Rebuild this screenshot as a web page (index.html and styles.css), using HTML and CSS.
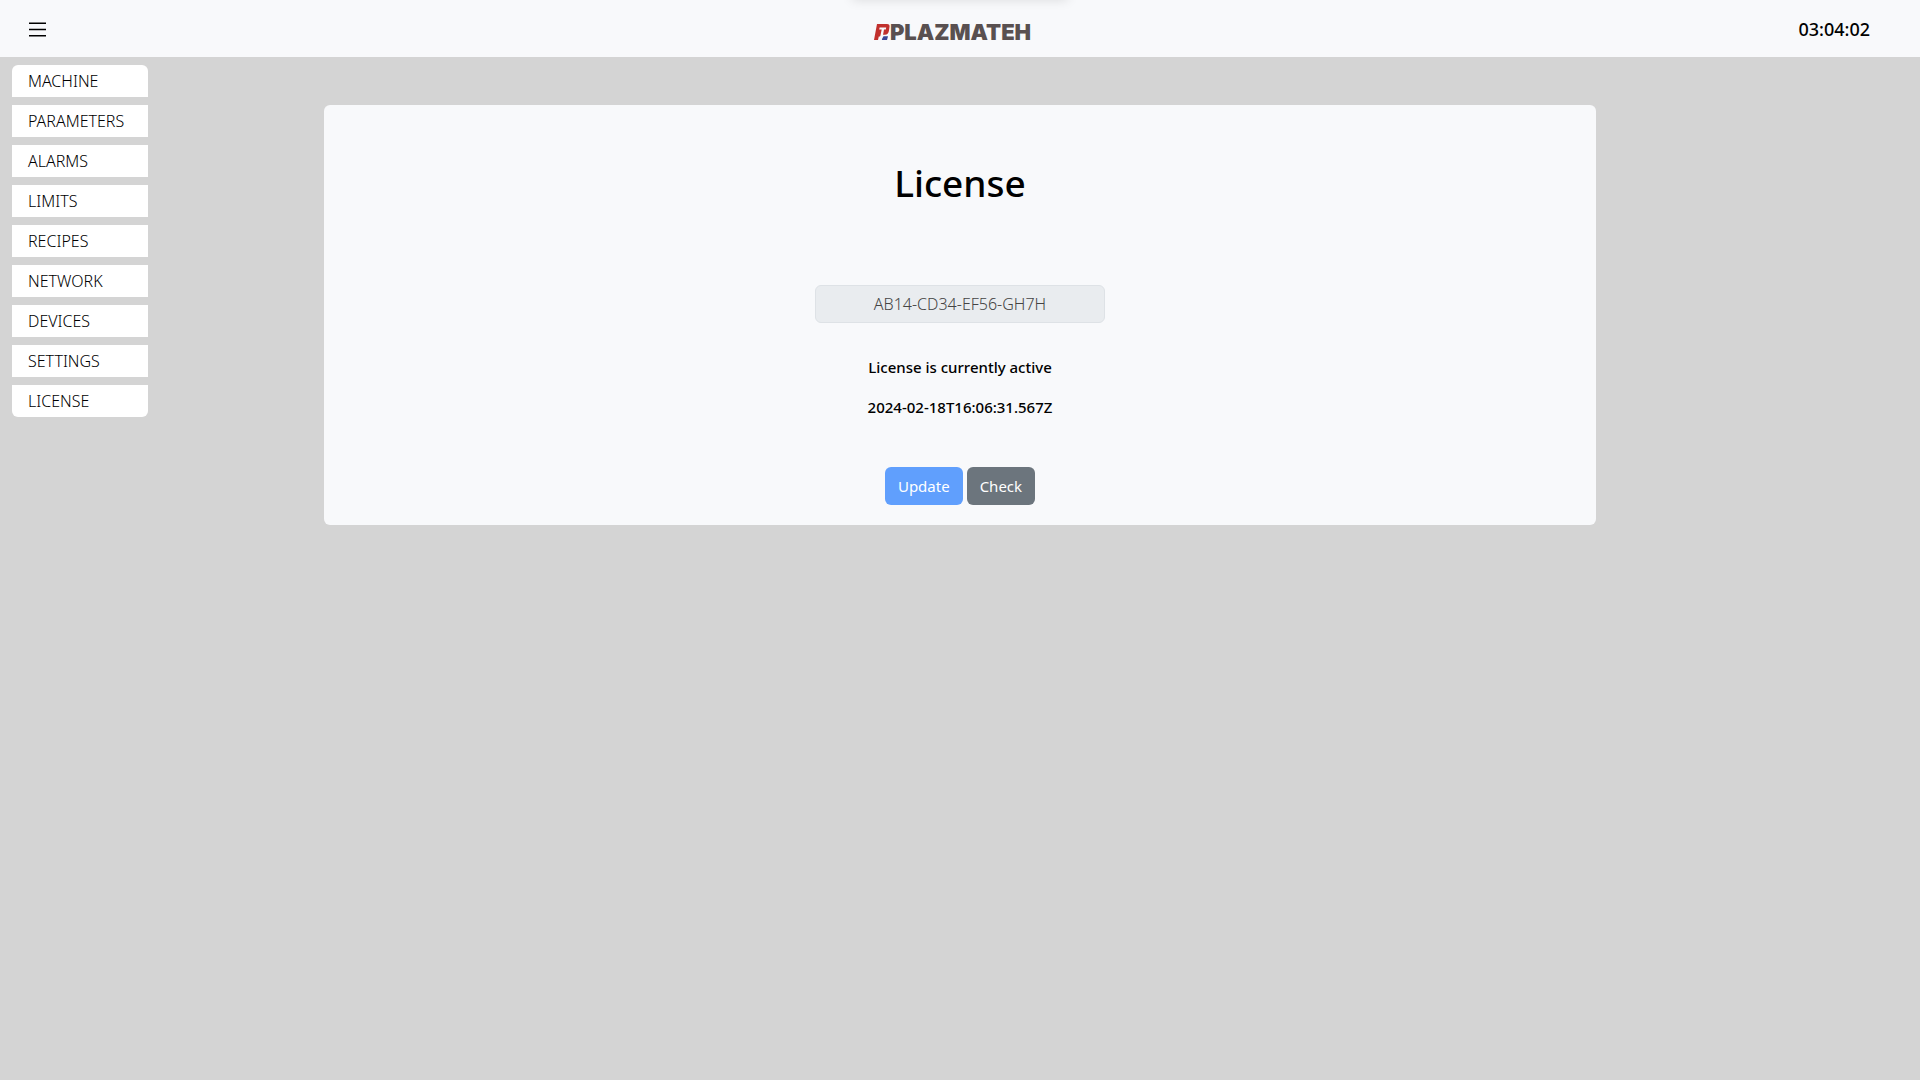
FILE: index.html
```html
<!DOCTYPE html>
<html lang="en">
<head>
<meta charset="utf-8">
<meta name="viewport" content="width=device-width, initial-scale=1">
<title>Plazmateh - License</title>
<link rel="stylesheet" href="styles.css">
</head>
<body>
<header class="topbar">
  <button class="menu-toggle" type="button" aria-label="Toggle menu">
    <svg width="17" height="15" viewBox="0 0 17 15" fill="none" stroke="currentColor" stroke-width="1.4"><path d="M0 1.300h17M0 7.500h17M0 13.700h17"/></svg>
  </button>
  <a class="brand" href="#">
    <svg class="brand-mark" width="16" height="16" viewBox="0 0 16 16" aria-hidden="true">
      <path fill="#c1302d" d="M3 0h10q3 0 2.500 3l-.6 4q-.6 3.500-4 3.800H7.500L6.400 12.500H4.800L4 16H0z"/>
      <path fill="#f8f9fb" d="M5.600 3.600h6.600l-.4 2H10L8.700 12.400l-1 3.600H5.500L7.700 5.600H5.200z"/>
      <path fill="#3a4596" d="M9.500 12.200H14L13 16H7.800l.5-1.500z"/>
    </svg>
    <span class="brand-name">PLAZMATEH</span>
  </a>
  <time class="clock">03:04:02</time>
</header>
<div class="layout">
  <nav class="sidebar" aria-label="Main">
    <a class="nav-item" href="#">MACHINE</a>
    <a class="nav-item" href="#">PARAMETERS</a>
    <a class="nav-item" href="#">ALARMS</a>
    <a class="nav-item" href="#">LIMITS</a>
    <a class="nav-item" href="#">RECIPES</a>
    <a class="nav-item" href="#">NETWORK</a>
    <a class="nav-item" href="#">DEVICES</a>
    <a class="nav-item" href="#">SETTINGS</a>
    <a class="nav-item" href="#">LICENSE</a>
  </nav>
  <main class="content">
    <section class="card">
      <h1 class="title">License</h1>
      <input class="license-key" type="text" value="AB14-CD34-EF56-GH7H" aria-label="License key" disabled>
      <p class="status">License is currently active</p>
      <p class="status">2024-02-18T16:06:31.567Z</p>
      <div class="actions">
        <button class="btn btn-primary" type="button" disabled>Update</button>
        <button class="btn btn-secondary" type="button">Check</button>
      </div>
    </section>
  </main>
</div>
</body>
</html>
```

FILE: styles.css
```css
* {
  box-sizing: border-box;
}

body {
  margin: 0;
  min-height: 100vh;
  background: #d4d4d4;
  color: #000;
  font-family: "Noto Sans", sans-serif;
  font-size: 15px;
  line-height: 24px;
}

.topbar {
  position: relative;
  display: grid;
  grid-template-columns: 1fr auto 1fr;
  align-items: center;
  height: 57px;
  padding: 0 50px 0 29px;
  background: #f8f9fb;
}

.topbar::before {
  content: "";
  position: absolute;
  bottom: 100%;
  left: 50%;
  width: 216px;
  height: 16px;
  margin-left: -108px;
  box-shadow: 0 0 12px rgba(0, 0, 0, 0.12);
}

.menu-toggle {
  justify-self: start;
  display: flex;
  padding: 2px 0 0;
  border: 0;
  background: none;
  color: #000;
}

.brand {
  display: flex;
  align-items: center;
  padding: 6px 0 0 6px;
  text-decoration: none;
}

.brand-name {
  color: #595050;
  font-family: Inter, "Liberation Sans", sans-serif;
  font-size: 22px;
  font-weight: 900;
}

.clock {
  justify-self: end;
  font-size: 18px;
  font-weight: 500;
}

.layout {
  display: grid;
  grid-template-columns: 136px 1fr 136px;
  padding: 8px 12px;
}

.sidebar {
  display: flex;
  flex-direction: column;
  gap: 8px;
}

.nav-item {
  padding: 4px 16px;
  background: #fff;
  color: #000;
  font-size: 16px;
  font-weight: 300;
  text-decoration: none;
}

.nav-item:first-child {
  border-radius: 6px 6px 0 0;
}

.nav-item:last-child {
  border-radius: 0 0 6px 6px;
}

.content {
  display: flex;
  justify-content: center;
  padding: 40px 176px 0;
}

.card {
  display: flex;
  flex-direction: column;
  align-items: center;
  flex: 1;
  padding: 54px 20px 20px;
  border-radius: 6px;
  background: #f8f9fb;
}

.title {
  margin: 0 0 78px;
  font-size: 37px;
  font-weight: 500;
  line-height: 48px;
}

.license-key {
  width: 290px;
  height: 38px;
  margin-bottom: 32px;
  padding: 6px 12px;
  border: 1px solid #dee2e6;
  border-radius: 6px;
  background: #e9ecef;
  color: #444;
  font: inherit;
  font-size: 16px;
  font-weight: 300;
  text-align: center;
}

.status {
  margin: 0 0 16px;
  font-weight: 500;
}

.actions {
  display: flex;
  gap: 4px;
  margin-top: 32px;
}

.btn {
  height: 38px;
  padding: 6px 13px;
  border: 0;
  border-radius: 6px;
  color: #fff;
  font: inherit;
}

.btn-primary {
  background: #609ffd;
}

.btn-secondary {
  background: #6c757d;
}
```
